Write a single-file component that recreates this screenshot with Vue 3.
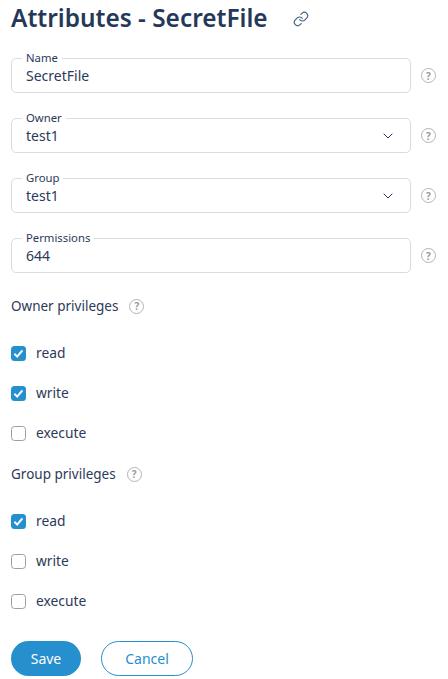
<template>
  <div class="attributes">
    <header class="attributes__header">
      <h1 class="attributes__title">Attributes - SecretFile</h1>
      <svg class="link-icon" viewBox="0 0 24 24" fill="none">
        <path d="M10 13a5 5 0 0 0 7.54.54l3-3a5 5 0 0 0-7.07-7.07l-1.72 1.71" />
        <path d="M14 11a5 5 0 0 0-7.54-.54l-3 3a5 5 0 0 0 7.07 7.07l1.71-1.71" />
      </svg>
    </header>

    <div class="fields">
      <div v-for="field in fields" :key="field.label" class="field-row">
        <div class="field">
          <span class="field__label">{{ field.label }}</span>
          <span class="field__value">{{ field.value }}</span>
          <svg v-if="field.select" class="field__chevron" viewBox="0 0 10 6" fill="none">
            <path d="M.7.7 5 5 9.3.7" />
          </svg>
        </div>
        <span class="help">?</span>
      </div>
    </div>

    <section v-for="group in privileges" :key="group.title" class="privileges">
      <div class="privileges__title">
        <span>{{ group.title }}</span>
        <span class="help">?</span>
      </div>
      <div class="privileges__list">
        <div v-for="item in group.items" :key="item.name" class="check">
          <span class="check__box" :class="{ 'check__box--on': item.on }">
            <svg v-if="item.on" viewBox="0 0 15 15" fill="none">
              <path d="M3.4 7.8 6.2 10.6 11.4 4.4" />
            </svg>
          </span>
          <span class="check__label">{{ item.name }}</span>
        </div>
      </div>
    </section>

    <div class="actions">
      <button class="btn btn--primary">Save</button>
      <button class="btn btn--outline">Cancel</button>
    </div>
  </div>
</template>

<script setup>
const fields = [
  { label: 'Name', value: 'SecretFile' },
  { label: 'Owner', value: 'test1', select: true },
  { label: 'Group', value: 'test1', select: true },
  { label: 'Permissions', value: '644' }
]

const privileges = [
  {
    title: 'Owner privileges',
    items: [
      { name: 'read', on: true },
      { name: 'write', on: true },
      { name: 'execute', on: false }
    ]
  },
  {
    title: 'Group privileges',
    items: [
      { name: 'read', on: true },
      { name: 'write', on: false },
      { name: 'execute', on: false }
    ]
  }
]
</script>

<style>
body {
  background: #fff;
}
</style>

<style scoped>
.attributes {
  width: 448px;
  height: 679px;
  overflow: hidden;
  box-sizing: border-box;
  padding: 0 11px;
  font-family: "Noto Sans", sans-serif;
  font-size: 14px;
  color: #2c3a59;
}

.attributes__header {
  display: flex;
  align-items: center;
  height: 38px;
}

.attributes__title {
  margin: 0 0 3px;
  font-size: 24.4px;
  line-height: 35px;
  font-weight: 600;
  color: #253858;
}

.link-icon {
  width: 16px;
  height: 16px;
  margin-left: 25px;
  stroke: #44607f;
  stroke-width: 1.7;
  stroke-linecap: round;
  stroke-linejoin: round;
}

.fields {
  display: flex;
  flex-direction: column;
  gap: 25px;
  margin-top: 20px;
}

.field-row {
  display: flex;
  align-items: center;
  gap: 10px;
}

.field {
  position: relative;
  display: flex;
  align-items: center;
  justify-content: space-between;
  box-sizing: border-box;
  width: 400px;
  height: 35px;
  padding: 0 17px 0 14px;
  border: 1px solid #d9dbde;
  border-radius: 5px;
}

.field__label {
  position: absolute;
  top: -8px;
  left: 10px;
  padding: 0 4px;
  background: #fff;
  font-size: 11.3px;
  line-height: 13px;
}

.field__chevron {
  width: 10px;
  height: 6px;
  stroke: #2c3a59;
  stroke-width: 1;
}

.help {
  display: flex;
  align-items: center;
  justify-content: center;
  box-sizing: border-box;
  width: 15px;
  height: 15px;
  border: 1.2px solid #b4b4b4;
  border-radius: 50%;
  font-size: 10px;
  font-weight: 700;
  line-height: 1;
  color: #9a9a9a;
}

.privileges {
  margin-top: 23px;
}

.privileges + .privileges {
  margin-top: 21px;
}

.privileges__title {
  display: flex;
  align-items: center;
  gap: 11px;
  height: 20px;
  font-size: 13.5px;
}

.privileges__list {
  display: flex;
  flex-direction: column;
  gap: 20px;
  margin-top: 27px;
}

.check {
  display: flex;
  align-items: center;
  gap: 10px;
  height: 20px;
}

.check__label {
  padding-bottom: 2px;
  font-size: 13.8px;
}

.check__box {
  box-sizing: border-box;
  width: 15px;
  height: 15px;
  border: 1px solid #9e9e9e;
  border-radius: 3.5px;
}

.check__box--on {
  border: none;
  background: #268fcd;
}

.check__box svg {
  display: block;
  width: 15px;
  height: 15px;
  stroke: #fff;
  stroke-width: 2;
}

.actions {
  display: flex;
  gap: 20px;
  margin-top: 30px;
}

.btn {
  height: 35px;
  border-radius: 18px;
  font-family: inherit;
  font-size: 14px;
  cursor: pointer;
}

.btn--primary {
  width: 70px;
  border: none;
  background: #268fcd;
  color: #fff;
}

.btn--outline {
  width: 92px;
  border: 1px solid #268fcd;
  background: #fff;
  color: #268fcd;
}
</style>
